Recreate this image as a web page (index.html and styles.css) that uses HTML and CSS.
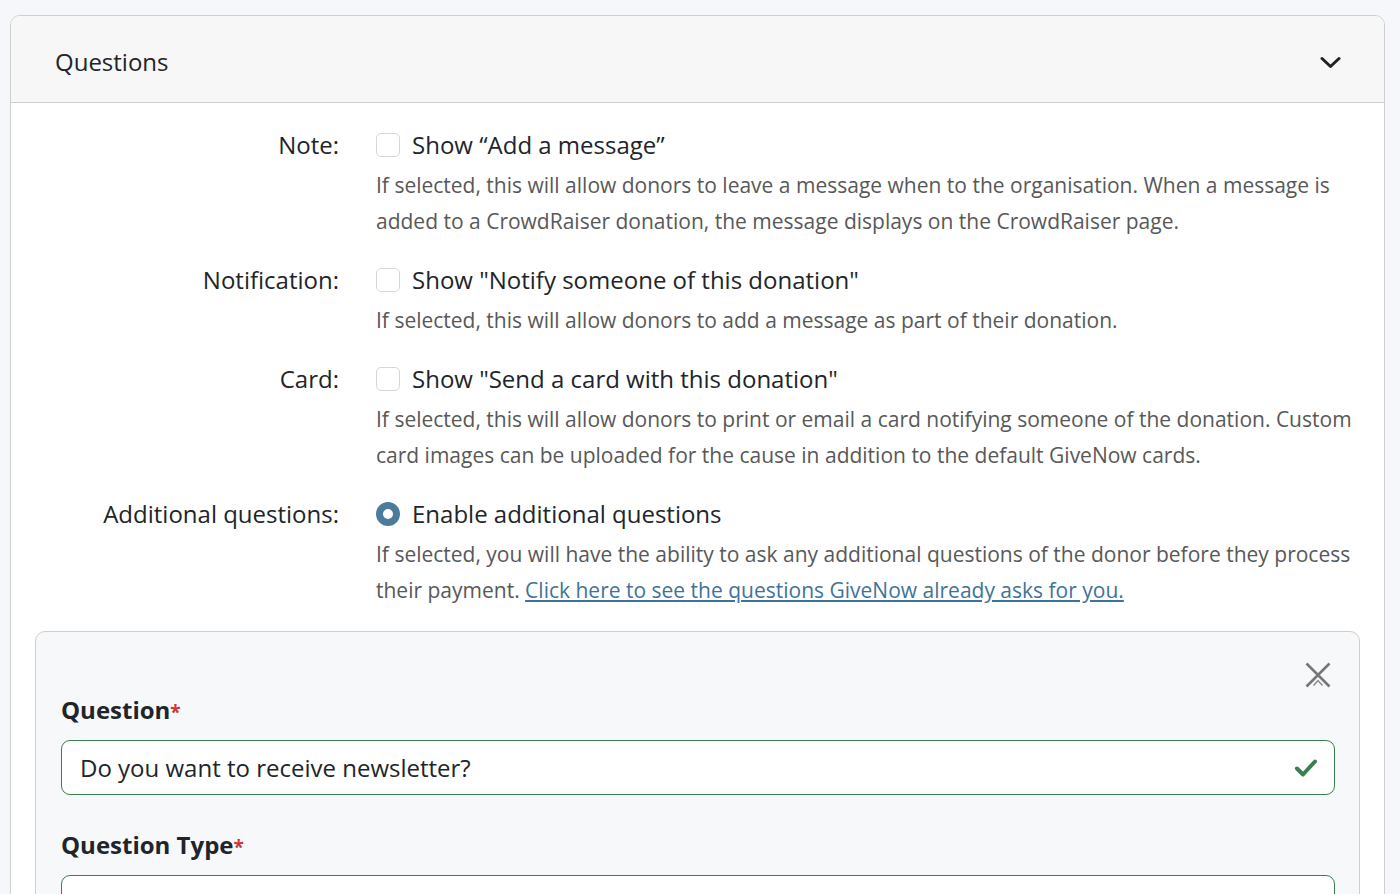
FILE: index.html
```html
<!DOCTYPE html>
<html lang="en">
<head>
<meta charset="utf-8">
<title>Questions</title>
<link rel="stylesheet" href="styles.css">
</head>
<body>
<div class="page">
  <section class="card">
    <header class="card-header">
      <h2 class="card-title">Questions</h2>
      <svg class="chevron" width="21" height="13" viewBox="0 0 21 13"><path d="M2 2.5 L10.5 10.5 L19 2.5" fill="none" stroke="#222" stroke-width="3" stroke-linecap="round" stroke-linejoin="round"/></svg>
    </header>
    <div class="card-body">
      <div class="opt-grid">
        <div class="opt-label">Note:</div>
        <div class="opt-main">
          <label class="opt-title"><span class="checkbox"></span>Show “Add a message”</label>
          <p class="opt-desc">If selected, this will allow donors to leave a message when to the organisation. When a message is added to a CrowdRaiser donation, the message displays on the CrowdRaiser page.</p>
        </div>

        <div class="opt-label">Notification:</div>
        <div class="opt-main">
          <label class="opt-title"><span class="checkbox"></span>Show "Notify someone of this donation"</label>
          <p class="opt-desc">If selected, this will allow donors to add a message as part of their donation.</p>
        </div>

        <div class="opt-label">Card:</div>
        <div class="opt-main">
          <label class="opt-title"><span class="checkbox"></span>Show "Send a card with this donation"</label>
          <p class="opt-desc">If selected, this will allow donors to print or email a card notifying someone of the donation. Custom card images can be uploaded for the cause in addition to the default GiveNow cards.</p>
        </div>

        <div class="opt-label">Additional questions:</div>
        <div class="opt-main">
          <label class="opt-title"><span class="radio"></span>Enable additional questions</label>
          <p class="opt-desc">If selected, you will have the ability to ask any additional questions of the donor before they process their payment. <a href="#" class="link">Click here to see the questions GiveNow already asks for you.</a></p>
        </div>
      </div>

      <div class="q-panel">
        <div class="q-close-row">
          <button class="q-close" type="button" aria-label="Remove">
            <svg width="26" height="26" viewBox="0 0 26 26"><path d="M1.5 1.5 L24.5 24.5 M24.5 1.5 L1.5 24.5" stroke="#777" stroke-width="2.6" fill="none"/><path d="M8.5 23.5 L13 18.5 L17.5 23.5" stroke="#888" stroke-width="1.4" fill="none"/></svg>
          </button>
        </div>
        <div class="q-label">Question<span class="req">*</span></div>
        <div class="q-input valid">
          <span class="q-value">Do you want to receive newsletter?</span>
          <svg class="q-check" width="24" height="20" viewBox="0 0 24 20"><path d="M3 10.5 L9 16.5 L21 3.5" fill="none" stroke="#3a7f52" stroke-width="4" stroke-linecap="round" stroke-linejoin="round"/></svg>
        </div>
        <div class="q-label">Question Type<span class="req">*</span></div>
        <div class="q-input valid"></div>
      </div>
    </div>
  </section>
</div>
</body>
</html>
```

FILE: styles.css
```css
* { box-sizing: border-box; }
html, body { margin: 0; padding: 0; }
body {
  background: #f5f7fb;
  font-family: "Open Sans", "Noto Sans", sans-serif;
  color: #212529;
  overflow: hidden;
}
.page {
  padding: 15px 15px 0 10px;
}
.card {
  border: 1px solid #cfcfcf;
  border-radius: 10px;
  background: #fff;
  overflow: hidden;
}
.card-header {
  height: 87px;
  background: #f7f7f7;
  border-bottom: 1px solid #cfcfcf;
  display: flex;
  align-items: center;
  justify-content: space-between;
  padding: 0 43px 0 44px;
}
.card-title {
  margin: 0;
  font-size: 24px;
  font-weight: 400;
  line-height: 32px;
  padding-top: 6px;
}
.chevron { display: block; margin-top: 7px; }
.card-body {
  padding: 26px 24px 0 24px;
}
.opt-grid {
  display: grid;
  grid-template-columns: 304px 1fr;
  column-gap: 37px;
  row-gap: 25px;
}
.opt-label {
  text-align: right;
  font-size: 24px;
  line-height: 32px;
}
.opt-title {
  display: flex;
  align-items: center;
  font-size: 24px;
  line-height: 32px;
}
.checkbox {
  width: 24px;
  height: 24px;
  border: 1px solid #d6d6d6;
  border-radius: 5px;
  background: #fff;
  margin-right: 12px;
  flex: none;
}
.radio {
  width: 24px;
  height: 24px;
  border-radius: 50%;
  border: 7px solid #4c7b9c;
  background: #fff;
  margin-right: 12px;
  flex: none;
}
.opt-desc {
  margin: 6px 0 0 0;
  font-size: 21px;
  line-height: 36px;
  color: #585858;
  padding-right: 8px;
}
.link {
  color: #3f7399;
  text-decoration: underline;
}
.q-panel {
  margin-top: 23px;
  background: #f7f8fa;
  border: 1px solid #cfcfcf;
  border-radius: 10px;
  padding: 30px 24px 40px 25px;
}
.q-close-row {
  display: flex;
  justify-content: flex-end;
  padding-right: 4px;
  height: 26px;
}
.q-close {
  border: 0;
  background: none;
  padding: 0;
  width: 26px;
  height: 26px;
  cursor: pointer;
}
.q-close svg { display: block; }
.q-label {
  font-weight: 700;
  font-size: 24px;
  line-height: 30px;
  margin-top: 7px;
}
.q-label + .q-input { margin-top: 13px; }
.q-input + .q-label { margin-top: 35px; }
.req {
  color: #d2323c;
  font-weight: 700;
  font-size: 19px;
}
.q-input {
  height: 55px;
  background: #fff;
  border: 1px solid #3a7f52;
  border-radius: 9px;
  display: flex;
  align-items: center;
  justify-content: space-between;
  padding: 0 16px 0 18px;
  font-size: 24px;
}
.q-check { display: block; }
```
